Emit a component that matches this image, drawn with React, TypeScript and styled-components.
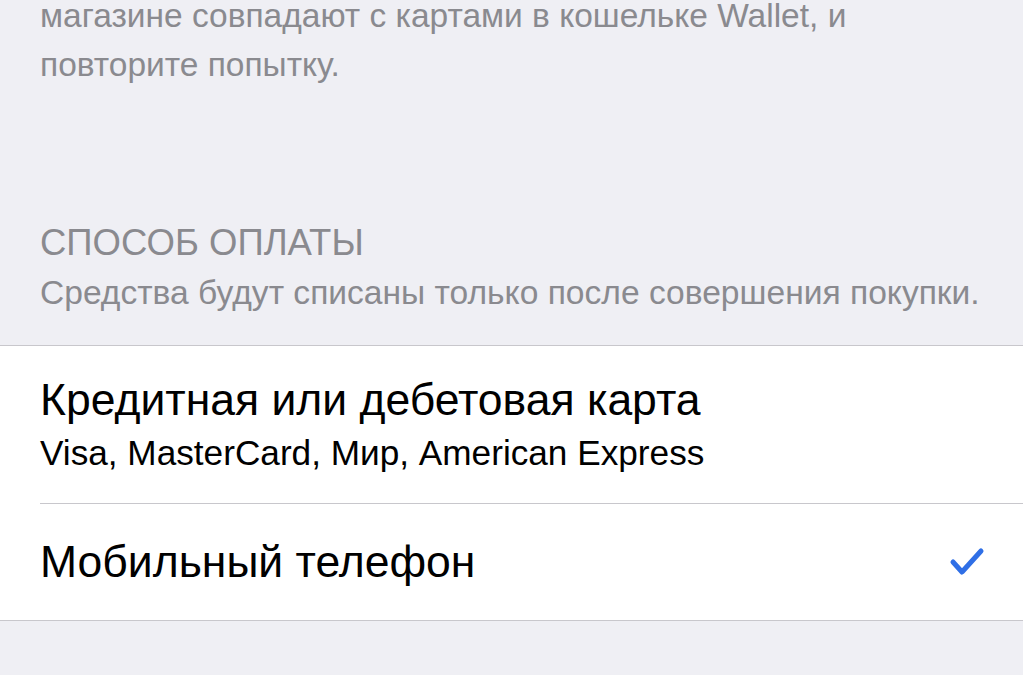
import React from "react";
import styled, { createGlobalStyle } from "styled-components";

const Global = createGlobalStyle`
  html, body {
    margin: 0;
    padding: 0;
    background: #efeff4;
    overflow: hidden;
  }
  body {
    font-family: "Liberation Sans", Arial, sans-serif;
    -webkit-font-smoothing: antialiased;
  }
`;

const Screen = styled.div`
  width: 1023px;
  height: 675px;
  background: #efeff4;
  display: flex;
  flex-direction: column;
  overflow: hidden;
`;

const Footnote = styled.p`
  margin: -9px 0 0;
  padding: 0 40px;
  font-size: 33.5px;
  line-height: 49px;
  color: #8a8a8f;
`;

const SectionHeader = styled.div`
  margin-top: 134px;
  padding: 0 40px 32px;
  display: flex;
  flex-direction: column;
  gap: 10px;
`;

const HeaderTitle = styled.div`
  font-size: 36.5px;
  line-height: 40px;
  color: #8a8a8f;
  text-transform: uppercase;
`;

const HeaderNote = styled.div`
  font-size: 33.6px;
  line-height: 40px;
  color: #8a8a8f;
  white-space: nowrap;
`;

const Group = styled.div`
  background: #ffffff;
  border-top: 1px solid #c8c7cc;
  border-bottom: 1px solid #c8c7cc;
  display: flex;
  flex-direction: column;
`;

/* A table cell; cells after the first get an inset hairline on top. */
const Row = styled.div<{ $height: number; $inset?: boolean }>`
  display: flex;
  align-items: center;
  padding: 0 38px 0 40px;
  height: ${(p) => p.$height}px;
  ${(p) =>
    p.$inset
      ? `
    margin-left: 40px;
    padding-left: 0;
    border-top: 1px solid #c8c7cc;
  `
      : ""}
`;

const RowText = styled.div`
  flex: 1;
  display: flex;
  flex-direction: column;
`;

const RowTitle = styled.div`
  font-size: 44.5px;
  line-height: 52px;
  color: #000;
  white-space: nowrap;
`;

const RowSubtitle = styled.div`
  font-size: 35.2px;
  line-height: 44px;
  color: #000;
  margin-top: 5px;
  white-space: nowrap;
`;

const Check = () => (
  <svg width="36" height="32" viewBox="0 0 36 32" aria-hidden>
    <path
      d="M4 16 L13 26 L32 5"
      fill="none"
      stroke="#2f6fe6"
      strokeWidth="5"
      strokeLinecap="round"
      strokeLinejoin="round"
    />
  </svg>
);

export default function App() {
  return (
    <Screen>
      <Global />
      <Footnote>
        магазине совпадают с картами в кошельке Wallet, и
        <br />
        повторите попытку.
      </Footnote>
      <SectionHeader>
        <HeaderTitle>Способ оплаты</HeaderTitle>
        <HeaderNote>Средства будут списаны только после совершения покупки.</HeaderNote>
      </SectionHeader>
      <Group>
        <Row $height={157}>
          <RowText>
            <RowTitle>Кредитная или дебетовая карта</RowTitle>
            <RowSubtitle>Visa, MasterCard, Мир, American Express</RowSubtitle>
          </RowText>
        </Row>
        <Row $height={116} $inset>
          <RowText>
            <RowTitle>Мобильный телефон</RowTitle>
          </RowText>
          <Check />
        </Row>
      </Group>
    </Screen>
  );
}
